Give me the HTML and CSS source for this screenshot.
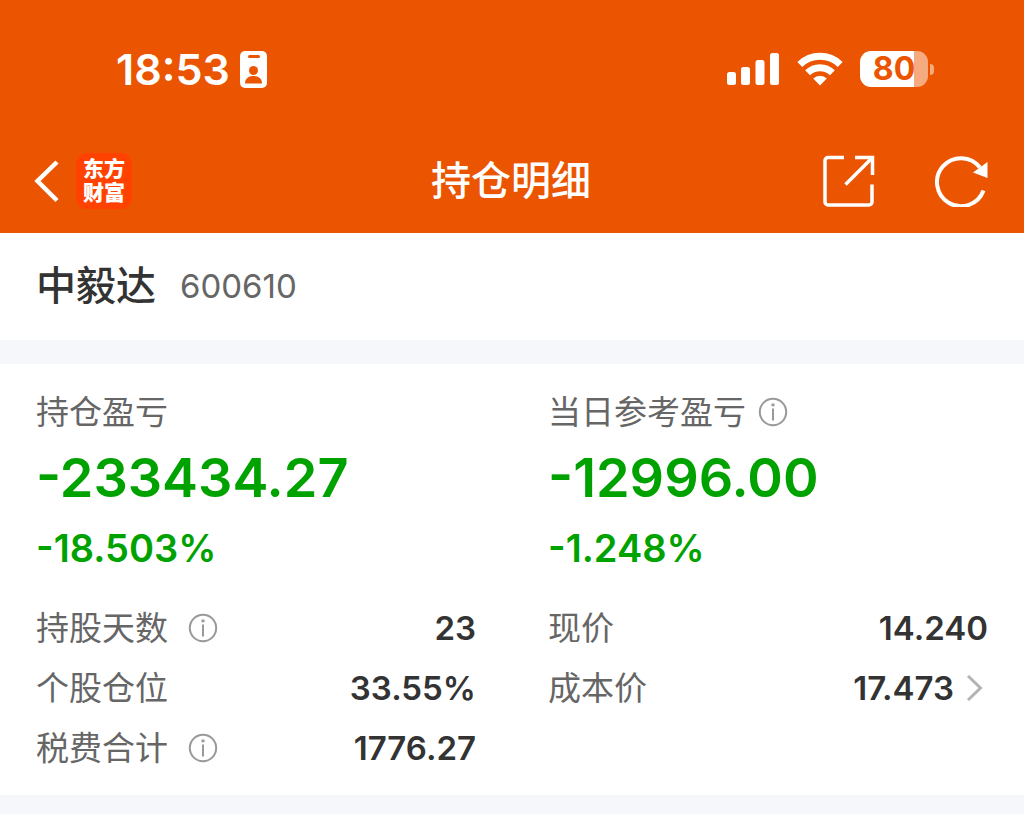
FILE: index.html
```html
<!DOCTYPE html>
<html lang="zh-CN">
<head>
<meta charset="utf-8">
<meta name="viewport" content="width=device-width, initial-scale=1">
<title>持仓明细</title>
<link rel="stylesheet" href="styles.css">
</head>
<body>
<header class="header">
  <div class="status">
    <div class="status-left">
      <time class="clock">18:53</time>
      <svg class="badge-icon" width="28" height="37" viewBox="0 0 28 37" aria-hidden="true">
        <rect x="0" y="0" width="27" height="37" rx="5" fill="#fff"/>
        <rect x="8" y="4" width="12" height="3" rx="1.500" fill="#eb5502"/>
        <circle cx="13.500" cy="19.500" r="4.500" fill="#eb5502"/>
        <path d="M5 32.500c0-5 3.500-7.500 8.500-7.500s8.500 2.500 8.500 7.500z" fill="#eb5502"/>
      </svg>
    </div>
    <div class="status-right">
      <svg width="53" height="34" viewBox="0 0 53 34" fill="#fff" aria-hidden="true">
        <rect x="0" y="20" width="9" height="13" rx="2.500"/>
        <rect x="14" y="15" width="9" height="18" rx="2.500"/>
        <rect x="28.500" y="8" width="9" height="25" rx="2.500"/>
        <rect x="43" y="1" width="9" height="32" rx="2.500"/>
      </svg>
      <svg width="46" height="34" viewBox="0 0 46 34" aria-hidden="true">
        <g fill="none" stroke="#fff" stroke-width="7">
          <path d="M2.800 12.400a29 29 0 0 1 40.400 0"/>
          <path d="M10.600 20.800a17.800 17.800 0 0 1 24.800 0"/>
        </g>
        <path d="M23 33.500l-6.800-7a10 10 0 0 1 13.600 0z" fill="#fff"/>
      </svg>
      <div class="battery"><span class="battery-body">80</span><span class="battery-cap"></span></div>
    </div>
  </div>
  <nav class="nav">
    <div class="nav-side">
      <button class="icon-button" type="button" aria-label="返回">
        <svg width="26" height="44" viewBox="0 0 26 44" fill="none" stroke="#fff" stroke-width="4.500" aria-hidden="true"><path d="M23 3L3.500 22L23 41.500"/></svg>
      </button>
      <a class="brand" href="#">东方财富</a>
    </div>
    <h1 class="title">持仓明细</h1>
    <div class="nav-side nav-actions">
      <button class="icon-button" type="button" aria-label="分享">
        <svg width="52" height="52" viewBox="0 0 52 52" fill="none" stroke="#fff" stroke-width="3.500" aria-hidden="true">
          <path d="M21 2.500H5a3 3 0 0 0-3 3V47a3 3 0 0 0 3 3h41a3 3 0 0 0 3-3V29.500"/>
          <path d="M32 2.500h17.500V20M49 3L22.500 29.500"/>
        </svg>
      </button>
      <button class="icon-button" type="button" aria-label="刷新">
        <svg width="53" height="52" viewBox="0 0 53 52" aria-hidden="true">
          <path d="M48.500 35.500A24 24 0 1 1 45 12.500" fill="none" stroke="#fff" stroke-width="4"/>
          <path d="M52.500 7v16L38 17.500z" fill="#fff"/>
        </svg>
      </button>
    </div>
  </nav>
</header>
<main>
  <section class="stock">
    <h2 class="stock-name">中毅达</h2>
    <span class="stock-code">600610</span>
  </section>
  <section class="holdings">
    <div class="column">
      <div class="label">持仓盈亏</div>
      <div class="amount">-233434.27</div>
      <div class="percent">-18.503%</div>
      <dl class="rows">
        <div class="row">
          <dt class="label label-spaced">持股天数
            <button class="icon-button" type="button" aria-label="持股天数说明"><svg class="info" width="30" height="30" viewBox="0 0 30 30" aria-hidden="true"><circle cx="15" cy="15" r="13.200"/><path d="M15 11.500v12"/><path class="dot" d="M15 6.500v2.800"/></svg></button>
          </dt>
          <dd class="value">23</dd>
        </div>
        <div class="row"><dt class="label">个股仓位</dt><dd class="value">33.55%</dd></div>
        <div class="row">
          <dt class="label label-spaced">税费合计
            <button class="icon-button" type="button" aria-label="税费合计说明"><svg class="info" width="30" height="30" viewBox="0 0 30 30" aria-hidden="true"><circle cx="15" cy="15" r="13.200"/><path d="M15 11.500v12"/><path class="dot" d="M15 6.500v2.800"/></svg></button>
          </dt>
          <dd class="value">1776.27</dd>
        </div>
      </dl>
    </div>
    <div class="column">
      <div class="label">当日参考盈亏
        <button class="icon-button" type="button" aria-label="当日参考盈亏说明"><svg class="info" width="30" height="30" viewBox="0 0 30 30" aria-hidden="true"><circle cx="15" cy="15" r="13.200"/><path d="M15 11.500v12"/><path class="dot" d="M15 6.500v2.800"/></svg></button>
      </div>
      <div class="amount">-12996.00</div>
      <div class="percent">-1.248%</div>
      <dl class="rows">
        <div class="row"><dt class="label">现价</dt><dd class="value">14.240</dd></div>
        <div class="row">
          <dt class="label">成本价</dt>
          <dd class="value">17.473
            <button class="icon-button" type="button" aria-label="查看成本价"><svg width="22" height="28" viewBox="0 0 22 28" fill="none" stroke="#b3b3b3" stroke-width="3" aria-hidden="true"><path d="M2 2l12.500 12L2 26"/></svg></button>
          </dd>
        </div>
      </dl>
    </div>
  </section>
</main>
</body>
</html>
```
FILE: styles.css
```css
* {
  box-sizing: border-box;
}

body {
  min-height: 100vh;
  margin: 0;
  background: #fff;
  color: #333;
  font-family: Inter, "Noto Sans CJK SC", sans-serif;
}

h1,
h2,
dl,
dd {
  margin: 0;
}

svg {
  display: block;
}

.icon-button {
  padding: 0;
  border: 0;
  background: none;
  cursor: pointer;
}

.header {
  background: #eb5502;
  color: #fff;
}

.status {
  display: flex;
  justify-content: space-between;
  align-items: center;
  height: 130px;
  padding: 8px 90px 0 116px;
}

.status-left {
  display: flex;
  align-items: center;
  gap: 10px;
}

.status-right {
  display: flex;
  align-items: center;
  gap: 17px;
}

.clock {
  font-size: 43px;
  font-weight: 600;
  line-height: 48px;
}

.battery {
  display: flex;
  align-items: center;
  gap: 2px;
}

.battery-body {
  width: 68px;
  border-radius: 11px;
  background: linear-gradient(to right, #fff 80%, #f5aa80 80%);
  color: #eb5502;
  font-size: 32px;
  font-weight: 700;
  line-height: 36px;
  text-align: center;
}

.battery-cap {
  width: 4px;
  height: 11px;
  border-radius: 0 4px 4px 0;
  background: #f5aa80;
}

.nav {
  display: grid;
  grid-template-columns: 1fr auto 1fr;
  align-items: center;
  height: 103px;
  padding: 0 36px 2px 34px;
}

.nav-side {
  display: flex;
  align-items: center;
  gap: 16px;
}

.nav-actions {
  justify-content: flex-end;
  gap: 60px;
}

.brand {
  width: 56px;
  height: 56px;
  padding: 2px 7px 0;
  border-radius: 10px;
  background: #ff4200;
  color: #fff;
  font-family: "Noto Sans CJK SC", sans-serif;
  font-size: 21px;
  font-weight: 900;
  line-height: 24px;
  text-decoration: none;
}

.title {
  font-size: 40px;
  font-weight: 500;
  line-height: 48px;
}

.stock {
  display: flex;
  align-items: center;
  gap: 24px;
  height: 107px;
  padding: 0 36px 2px;
}

.stock-name {
  font-size: 40px;
  font-weight: 500;
  line-height: 48px;
}

.stock-code {
  color: #666;
  font-size: 33px;
  line-height: 48px;
}

.holdings {
  display: grid;
  grid-template-columns: 1fr 1fr;
  gap: 72px;
  padding: 24px 36px 17px;
  border-top: 24px solid #f6f7fa;
  border-bottom: 19px solid #f6f7fa;
}

.label {
  display: flex;
  align-items: center;
  gap: 12px;
  color: #666;
  font-size: 33px;
  line-height: 48px;
}

.label-spaced {
  gap: 20px;
}

.amount {
  color: #00a200;
  font-size: 54px;
  font-weight: 600;
  line-height: 84px;
}

.percent {
  color: #00a200;
  font-size: 38px;
  font-weight: 600;
  line-height: 56px;
}

.rows {
  padding-top: 22px;
}

.row {
  display: flex;
  justify-content: space-between;
  align-items: center;
  height: 60px;
}

.value {
  display: flex;
  align-items: center;
  gap: 12px;
  font-size: 33px;
  font-weight: 600;
  line-height: 48px;
}

.info {
  fill: none;
  stroke: #999;
  stroke-width: 2;
}

.info .dot {
  stroke-width: 3;
}
```
